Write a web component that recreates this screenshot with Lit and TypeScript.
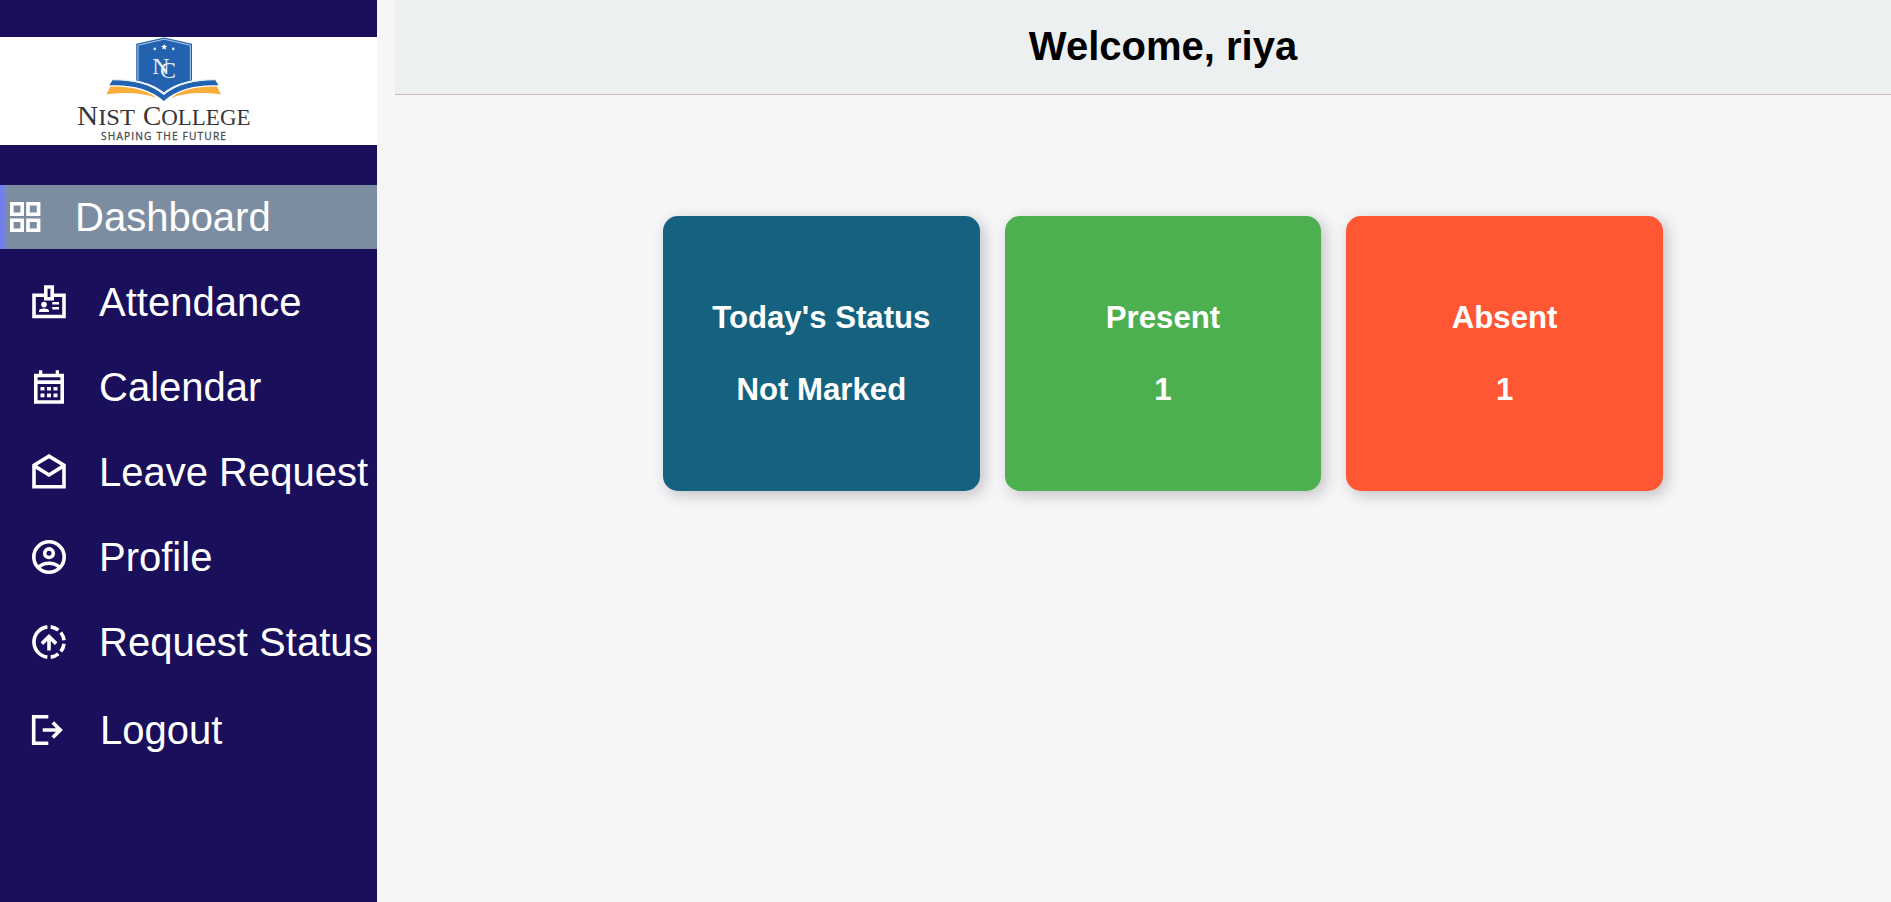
import { LitElement, html, css, svg } from "lit";
import { customElement } from "lit/decorators.js";

const icons: Record<string, unknown> = {
  grid: svg`<path fill="none" stroke="currentColor" stroke-width="3.6" d="M6.8 6.8h10.4v10.4H6.8zM23 6.8h10.6v10.4H23zM6.8 23.2h10.4v10H6.8zM23 23.2h10.6v10H23z"/>`,
  badge: svg`<path fill="none" stroke="currentColor" stroke-width="3.6" d="M15.3 13.3H5v21.2h30V13.3H24.7"/>
    <path fill="none" stroke="currentColor" stroke-width="3.6" d="M16.8 5h6.4v11.7h-6.4z"/>
    <circle cx="15" cy="22.6" r="2.8"/><path d="M10 30.1v-1.4c0-3.1 10-3.1 10 0v1.4zM23.3 20H30v2.6h-6.7zM23.3 25H30v2.6h-6.7z"/>`,
  calendar: svg`<path d="M5 6.7h5V3.3h3.3v3.4h13.4V3.3H30v3.4h5v30H5zM8.6 16.9v16.3h22.8V16.9zM8.6 10.2v3.1h22.8v-3.1z" fill-rule="evenodd"/>
    <path d="M11.5 20h4v3.6h-4zM18 20h4v3.6h-4zM24.5 20h4v3.6h-4zM11.5 26.6h4v3.6h-4zM18 26.6h4v3.6h-4zM24.5 26.6h4v3.6h-4z"/>`,
  mail: svg`<path fill="none" stroke="currentColor" stroke-width="3.6" d="M5 13.2 20 4.2 35 13.2V34.8H5zM5 13.6l15 9.4 15-9.4"/>`,
  profile: svg`<g fill="none" stroke="currentColor" stroke-width="3.6"><circle cx="20" cy="20" r="15.2"/><circle cx="20" cy="16.2" r="4.3"/><path d="M9.5 30.2c6-5.2 15-5.2 21 0"/></g>`,
  request: svg`<g fill="none" stroke="currentColor" stroke-width="3.6"><path d="M18.4 4.9a15.2 15.2 0 0 0 0 30.2"/>
    <path d="M21.7 4.9a15.2 15.2 0 0 1 7.7 3.2M31.8 10.5a15.2 15.2 0 0 1 3.2 7.8M35 21.7a15.2 15.2 0 0 1-3.2 7.8M29.4 31.9a15.2 15.2 0 0 1-7.7 3.2M20 28.5V14.8M12.9 21.6l7.1-7 7.1 7"/></g>`,
  logout: svg`<g fill="none" stroke="currentColor" stroke-width="3.6"><path d="M21.3 6.7H6.7v26.6h14.6M15.7 20h17.5M25.8 12.4l7.5 7.6-7.5 7.6"/></g>`,
};

const links = [
  ["grid", "Dashboard", "link active"],
  ["badge", "Attendance", "link"],
  ["calendar", "Calendar", "link"],
  ["mail", "Leave Request", "link"],
  ["profile", "Profile", "link"],
  ["request", "Request Status", "link"],
  ["logout", "Logout", "link logout"],
];

const cards = [
  ["Today's Status", "Not Marked", "card today"],
  ["Present", "1", "card present"],
  ["Absent", "1", "card absent"],
];

@customElement("college-logo")
class CollegeLogo extends LitElement {
  static styles = css`
    :host { display: block; height: 108px; background: #fff; }
    svg { display: block; }
    .serif { font-family: "Liberation Serif", serif; }
    .tag { font-family: "Open Sans", sans-serif; }
  `;
  render() {
    return html`<svg width="377" height="108" viewBox="0 37 377 108">
      <path d="M106.3 94.6 110.3 86.6C128 86 145 89 157 98.2 142 92.5 124 92 106.3 94.6ZM220.9 94.6 217 86.6C199 86 182 89 170.5 98.2 185 92.5 203 92 220.9 94.6Z" fill="#f9ae3b"/>
      <path d="M136.2 43.8 164.2 37.5 192 43.8V80.5C181 82.5 171 86.5 163.9 92.5 157 86.5 147 82.5 136.2 80.5Z" fill="#2362af"/>
      <path d="M137.9 80.5V45.2L164.2 39.2 190.3 45.2V80.5" fill="none" stroke="#dce9f6" stroke-width=".8"/>
      <path d="M109.3 85.3 112.8 79.8C132 79.8 151 84 163.8 95 177 84 196 79.8 215 79.8L218.5 85.3C198 84.2 177 88.5 163.8 101 151 88.5 130 84.2 109.3 85.3Z" fill="#2362af"/>
      <path d="M113 79.6C132 79.6 151 83 163.9 93.8 177 83 196 79.6 215 79.6" fill="none" stroke="#e4eef8" stroke-width="1.3"/>
      <path d="m164.2 43.9.9 1.9 2.1.2-1.6 1.4.5 2.1-1.9-1.1-1.9 1.1.5-2.1-1.6-1.4 2.1-.2z" fill="#fff"/>
      <circle cx="154.8" cy="48.9" r="1.3" fill="#dce9f6"/><circle cx="173.2" cy="48.9" r="1.3" fill="#dce9f6"/>
      <text class="serif" x="152.2" y="74.4" font-size="24" fill="#e6f0fa">N<tspan dx="-9.6" dy="3.6">C</tspan></text>
      <g class="serif" fill="#363639">
        <text x="77" y="124.5" font-size="28" textLength="58" lengthAdjust="spacingAndGlyphs">N<tspan font-size="23.5">IST</tspan></text>
        <text x="143" y="124.5" font-size="28" textLength="107.5" lengthAdjust="spacingAndGlyphs">C<tspan font-size="23.5">OLLEGE</tspan></text>
      </g>
      <text class="tag" x="101" y="139.8" font-size="10.2" fill="#4c4c4f" stroke="#4c4c4f" stroke-width=".3" textLength="125" lengthAdjust="spacing">SHAPING THE FUTURE</text>
    </svg>`;
  }
}

@customElement("app-root")
class AppRoot extends LitElement {
  static styles = css`
    * { box-sizing: border-box; }
    :host {
      display: grid; grid-template-columns: 377px 1496px; gap: 18px;
      height: 902px; overflow: hidden; background: #f6f6f9;
      font-family: "Liberation Sans", Arial, sans-serif;
    }
    aside { background: #1a0f5b; padding-top: 37px; }
    nav { display: flex; flex-direction: column; gap: 21px; margin-top: 40px; }
    .link {
      display: flex; align-items: center; gap: 30px; height: 64px;
      padding-left: 29px; color: #fff; font-size: 40px; line-height: 46px;
      white-space: nowrap; text-decoration: none;
    }
    .link svg { flex: none; }
    .active { background: #7d8da1; border-left: 5px solid #7380ec; padding-left: 0; }
    .logout { margin-top: 3px; padding-left: 27px; gap: 33px; }
    header {
      display: flex; align-items: center; justify-content: center;
      height: 95px; background: #ecf0f1; border-bottom: 1px solid #c9bcba;
    }
    h1 { margin: 0; padding: 0 0 2px 40px; font-size: 40px; line-height: 46px; color: #000; }
    .cards {
      display: grid; grid-template-columns: repeat(3, 1fr); gap: 25px;
      width: 1000px; margin: 121px 0 0 268px;
    }
    .card {
      display: flex; flex-direction: column; align-items: center; justify-content: center;
      gap: 38px; height: 275px; border-radius: 15px; color: #fff;
      box-shadow: 4px 4px 15px rgba(0, 0, 0, 0.22);
      font-size: 31.2px; font-weight: bold; line-height: 34px;
    }
    .today { background: #14627f; }
    .present { background: #4caf50; }
    .absent { background: #ff5733; }
  `;
  render() {
    return html`
      <aside>
        <college-logo></college-logo>
        <nav>
          ${links.map(([icon, label, cls]) => html`<a class=${cls}>
            <svg width="40" height="40" viewBox="0 0 40 40" fill="currentColor">${icons[icon]}</svg><span>${label}</span></a>`)}
        </nav>
      </aside>
      <main>
        <header><h1>Welcome, riya</h1></header>
        <section class="cards">
          ${cards.map(([title, value, cls]) => html`<div class=${cls}><span>${title}</span><span>${value}</span></div>`)}
        </section>
      </main>`;
  }
}
